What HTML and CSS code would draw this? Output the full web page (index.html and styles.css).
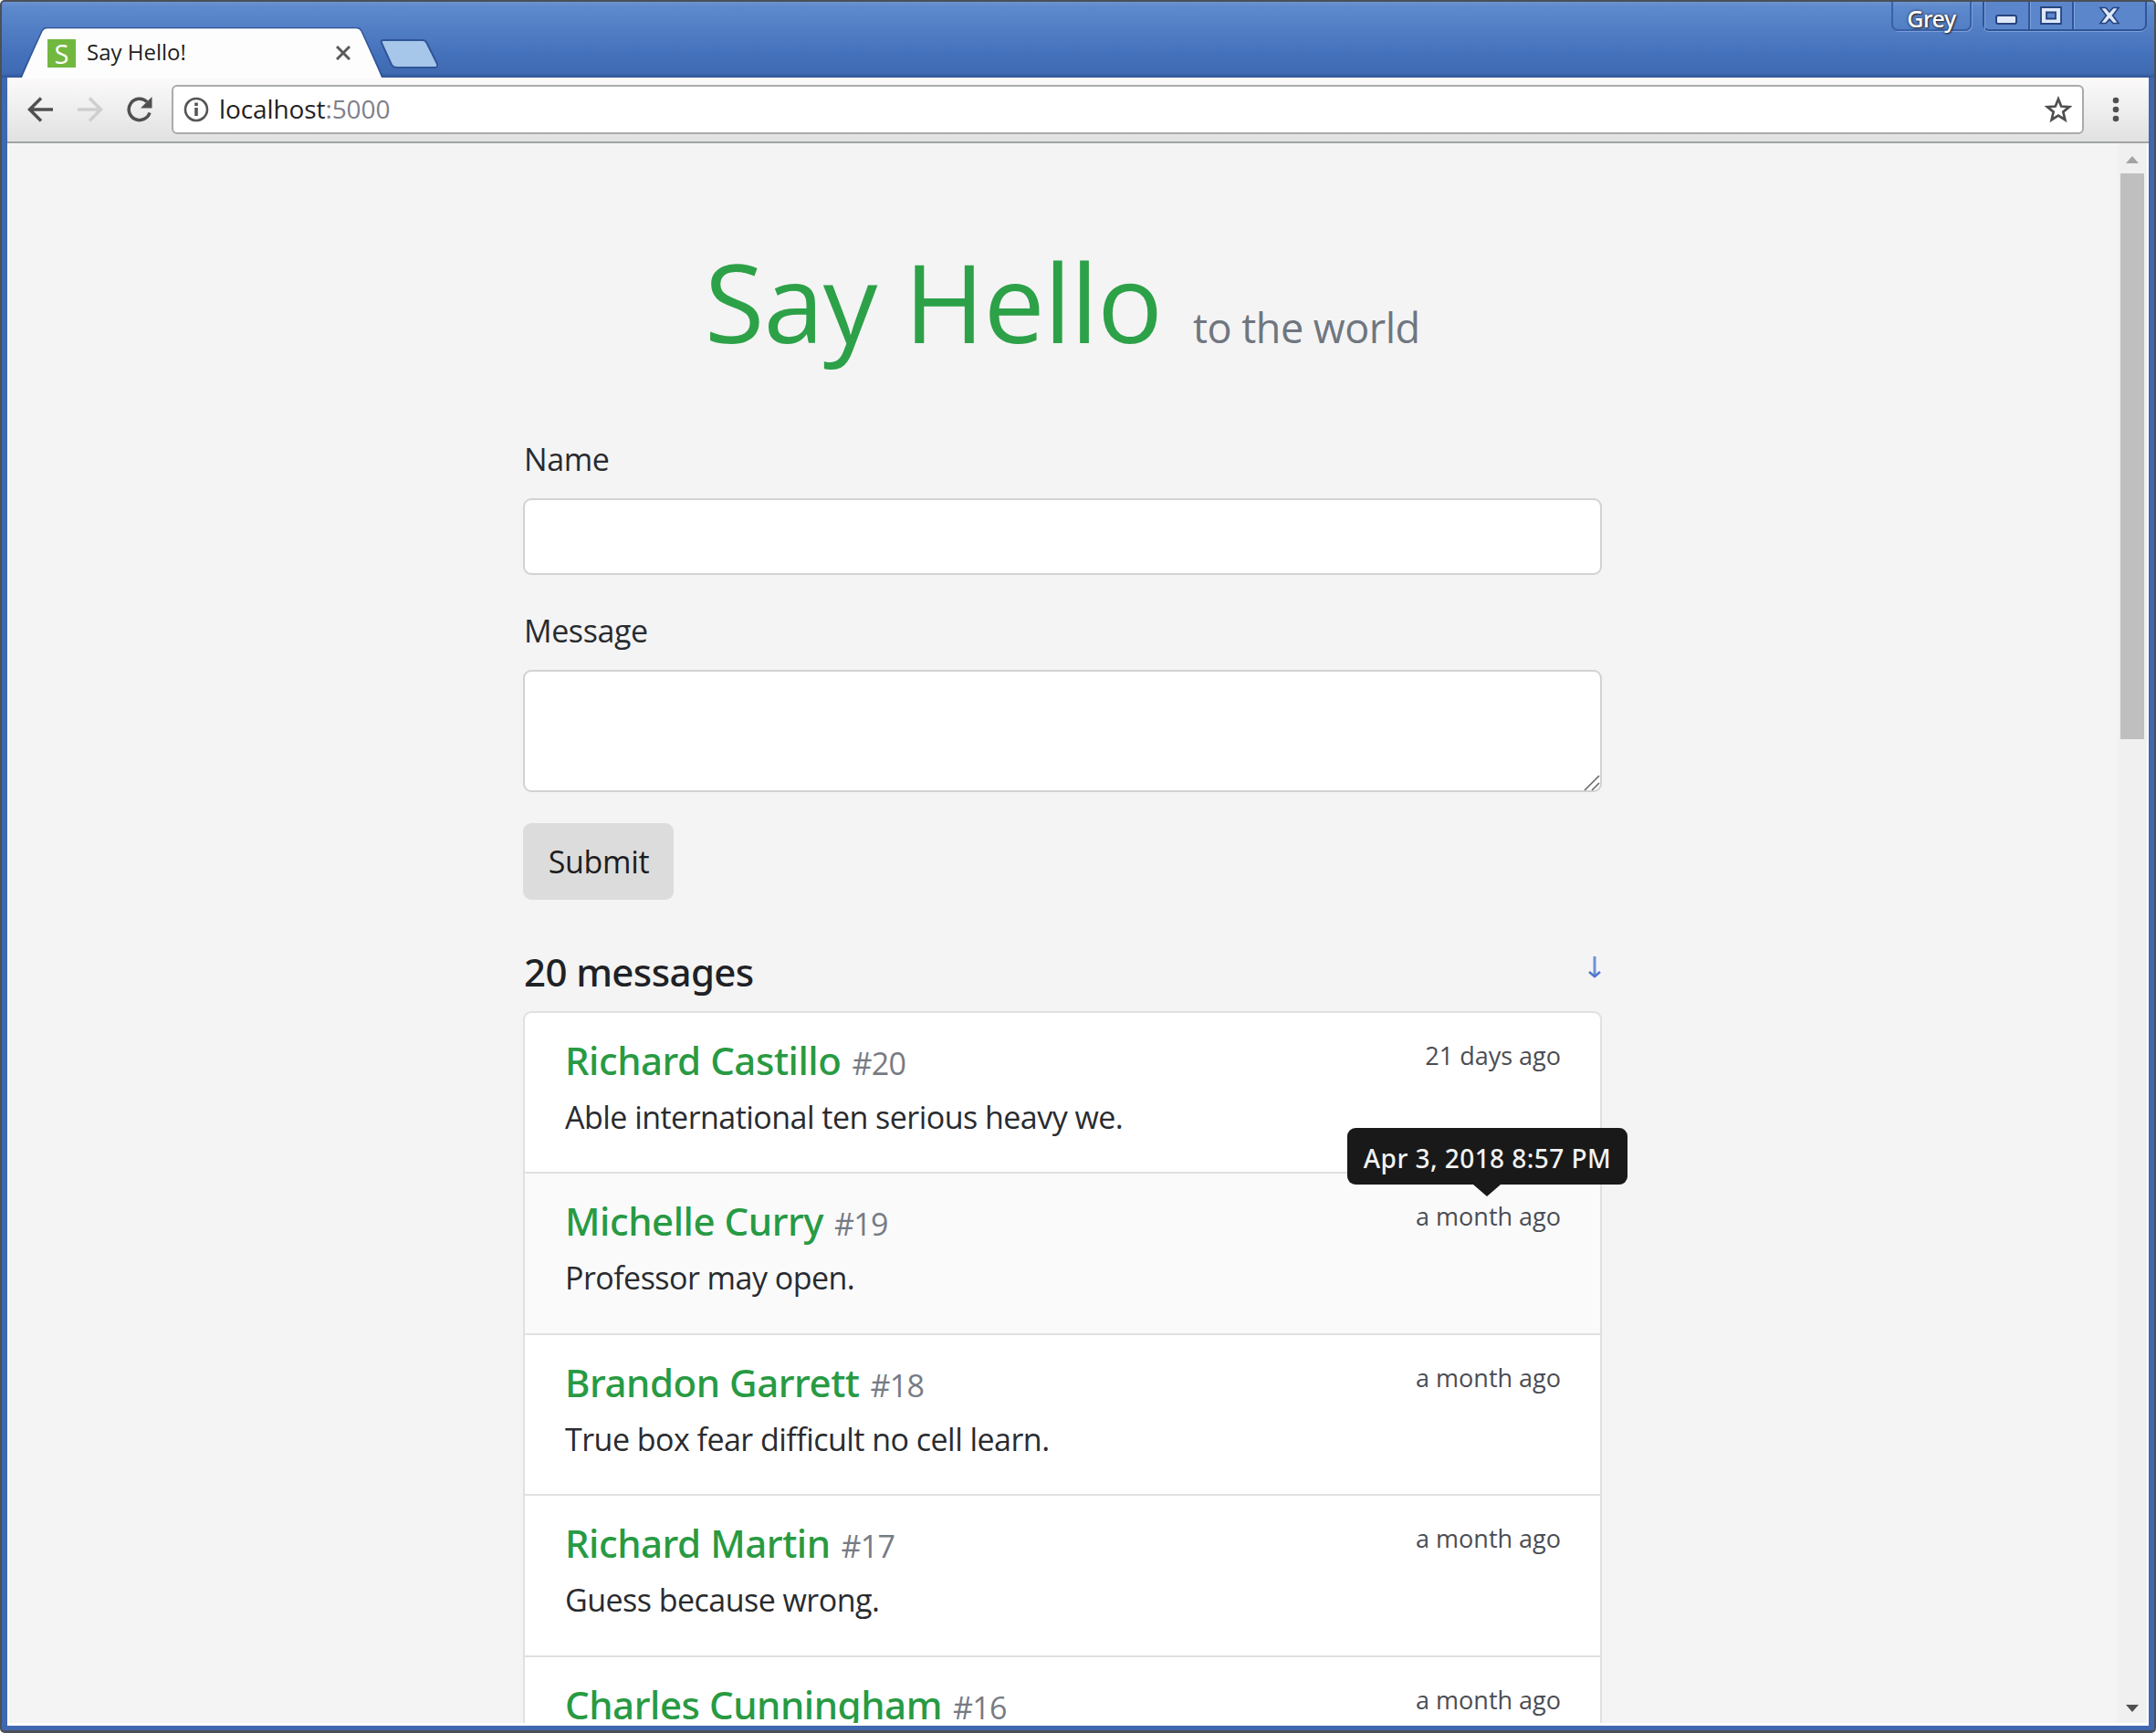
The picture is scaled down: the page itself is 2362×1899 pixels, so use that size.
FILE: index.html
```html
<!DOCTYPE html>
<html lang="en">
<head>
<meta charset="utf-8">
<title>Say Hello!</title>
<link rel="stylesheet" href="styles.css">
</head>
<body>
<div class="window">
  <header class="titlebar">
    <div class="tab">
      <svg class="tab-shape" width="398" height="56" viewBox="0 0 398 56"><path d="M0 55H2L24 4Q26 1 29 1H369Q372 1 374 4L396 55H398V56H0Z" fill="#fdfdfd"/><path d="M1 54L24 4Q26 .5 29 .5H369Q372 .5 374 4L397 54" fill="none" stroke="#2f5596" stroke-width="1.5"/></svg>
      <span class="favicon">S</span>
      <span class="tab-title">Say Hello!</span>
      <svg class="tab-close" width="16" height="16" viewBox="0 0 16 16"><path d="M1 1L15 15M15 1L1 15" stroke="#5a5a5a" stroke-width="3"/></svg>
    </div>
    <svg class="new-tab" width="68" height="36" viewBox="0 0 68 36"><path d="M5 2H48Q51 2 52.500 5L64 28Q65 32 61 32H20Q16 32 14 29L3 5Q2 2 5 2Z" fill="#a6c6ea" stroke="#2f5596" stroke-width="2"/></svg>
    <div class="controls">
      <span class="user">Grey</span>
      <div class="buttons">
        <span class="btn-min"><svg width="24" height="11" viewBox="0 0 24 11"><rect x="1" y="1" width="22" height="9" rx="2" fill="#dfe8f8" stroke="#26447e" stroke-width="2"/></svg></span>
        <span class="btn-max"><svg width="24" height="20" viewBox="0 0 24 20"><path d="M1 1H23V19H1ZM7 6.500V13.500H17V6.500Z" fill="#dfe8f8" fill-rule="evenodd" stroke="#26447e" stroke-width="1.800"/></svg></span>
        <span class="btn-close"><svg width="24" height="20" viewBox="0 0 24 20"><path d="M2 1.500H8L12 6L16 1.500H22L15.500 10L22 18.500H16L12 14L8 18.500H2L8.500 10Z" fill="#dfe8f8" stroke="#26447e" stroke-width="1.600"/></svg></span>
      </div>
    </div>
  </header>
  <nav class="toolbar">
    <svg class="nav-back" width="28" height="28" viewBox="0 0 28 28"><path d="M28 14H3M15 1.500L2.500 14L15 26.500" fill="none" stroke="#505050" stroke-width="3.500"/></svg>
    <svg class="nav-forward" width="28" height="28" viewBox="0 0 28 28"><path d="M0 14H25M13 1.500L25.500 14L13 26.500" fill="none" stroke="#cfcfcf" stroke-width="3.500"/></svg>
    <svg class="nav-reload" width="28" height="28" viewBox="0 0 28 28"><path d="M25 17.500A11.700 11.700 0 1 1 22 5.500" fill="none" stroke="#505050" stroke-width="3.500"/><path d="M27.500 0V12.500H15Z" fill="#505050"/></svg>
    <div class="omnibox">
      <svg width="28" height="28" viewBox="0 0 28 28"><circle cx="14" cy="14" r="12" fill="none" stroke="#555" stroke-width="2.600"/><path d="M14 12V21M14 6.500V10" stroke="#555" stroke-width="3.600"/></svg>
      <span class="url">localhost<span class="port">:5000</span></span>
      <svg class="star" width="30" height="30" viewBox="0 0 30 30"><path d="M15 3.500L18.200 11.500L27 12.100L20.300 17.600L22.400 26.200L15 21.500L7.600 26.200L9.700 17.600L3 12.100L11.800 11.500Z" fill="none" stroke="#505050" stroke-width="2.700"/></svg>
    </div>
    <svg class="menu" width="8" height="28" viewBox="0 0 8 28"><circle cx="4" cy="4" r="3.300" fill="#505050"/><circle cx="4" cy="14" r="3.300" fill="#505050"/><circle cx="4" cy="24" r="3.300" fill="#505050"/></svg>
  </nav>
  <div class="viewport">
    <main class="page">
      <h1 class="hero"><span class="hero-title">Say Hello</span><small class="hero-sub">to the world</small></h1>
      <form class="form">
        <label class="label" for="name">Name</label>
        <input class="field" id="name" type="text">
        <label class="label" for="message">Message</label>
        <div class="area-wrap">
          <textarea class="field area" id="message"></textarea>
          <svg class="grip" width="18" height="18" viewBox="0 0 18 18"><path d="M1 17L17 1M9 17L17 9" stroke="#666" stroke-width="1.600"/></svg>
        </div>
        <button class="submit" type="button">Submit</button>
      </form>
      <div class="list-head"><h2 class="count">20 messages</h2><svg class="sort" width="14" height="24" viewBox="0 0 14 24"><path d="M7 0V21" stroke="#7191d6" stroke-width="3"/><path d="M1 17L7 22L13 17" fill="none" stroke="#4f78cc" stroke-width="2.600"/></svg></div>
      <ul class="list">
        <li class="item"><div class="item-head"><h3 class="name">Richard Castillo</h3><small class="num">#20</small><time class="ago">21 days ago</time></div><p class="text">Able international ten serious heavy we.</p></li>
        <li class="item hovered"><div class="item-head"><h3 class="name">Michelle Curry</h3><small class="num">#19</small><time class="ago">a month ago<span class="tooltip">Apr 3, 2018 8:57 PM</span></time></div><p class="text">Professor may open.</p></li>
        <li class="item"><div class="item-head"><h3 class="name">Brandon Garrett</h3><small class="num">#18</small><time class="ago">a month ago</time></div><p class="text">True box fear difficult no cell learn.</p></li>
        <li class="item"><div class="item-head"><h3 class="name">Richard Martin</h3><small class="num">#17</small><time class="ago">a month ago</time></div><p class="text">Guess because wrong.</p></li>
        <li class="item"><div class="item-head"><h3 class="name">Charles Cunningham</h3><small class="num">#16</small><time class="ago">a month ago</time></div></li>
      </ul>
    </main>
    <aside class="scrollbar">
      <svg width="14" height="9" viewBox="0 0 14 9"><path d="M0 9L7 1L14 9Z" fill="#a3a3a3"/></svg>
      <div class="thumb"></div>
      <svg class="down" width="14" height="8" viewBox="0 0 14 8"><path d="M0 0H14L7 8Z" fill="#505050"/></svg>
    </aside>
  </div>
</div>
</body>
</html>
```
FILE: styles.css
```css
* { box-sizing: border-box; }
body { margin: 0; font-family: "Open Sans", "Noto Sans", sans-serif; color: #292b2f; }
h1, h2, h3, p, ul { margin: 0; padding: 0; font-weight: 400; }
svg { display: block; flex: none; }
.window { display: flex; flex-direction: column; width: 2362px; height: 1899px; overflow: hidden; background: #3f68b0; border: 2px solid #4b5057; border-bottom-width: 3px; border-radius: 5px; }

.titlebar { display: flex; flex: none; height: 83px; padding-left: 20px; background: linear-gradient(#6b93d0, #5d89cd 6px, #4370ba 60px, #406bb3 78px, #2f5596 83px); }
.tab { position: relative; display: flex; align-items: center; width: 398px; height: 56px; margin-top: 28px; padding-left: 30px; }
.tab-shape { position: absolute; left: 0; top: 0; }
.favicon { position: relative; display: flex; align-items: center; justify-content: center; width: 31px; height: 31px; background: #72b840; color: #fff; font-size: 29px; line-height: 31px; }
.tab-title { position: relative; margin-left: 12px; padding-bottom: 2px; font-size: 24px; line-height: 32px; color: #222; }
.tab-close { position: absolute; left: 346px; top: 20px; }
.new-tab { margin: 40px 0 0 -5px; }
.controls { display: flex; margin-left: auto; gap: 12px; padding-right: 8px; height: 34px; }
.user { width: 88px; height: 32px; border: 2px solid #3960a6; border-top: 0; border-radius: 0 0 7px 7px; box-shadow: 1px 1px 0 #7a9fdb; color: #fff; font: 500 25px/36px "Noto Sans", sans-serif; letter-spacing: -0.4px; text-align: center; text-shadow: 0 0 3px #223, 1px 1px 2px #333; }
.buttons { display: flex; width: 180px; height: 32px; border: 2px solid #2f5597; border-top: 0; border-radius: 0 0 7px 7px; box-shadow: 0 1px 0 #7a9fdb; background: #5b86cb; }
.buttons span { display: flex; align-items: center; justify-content: center; width: 48px; box-shadow: inset 1px 0 0 #7ea3de; }
.buttons .btn-min { padding-top: 9px; }
.buttons .btn-max { border-left: 2px solid #2f5597; border-right: 2px solid #2f5597; width: 50px; }
.buttons .btn-close { flex: 1; }

.toolbar { display: flex; flex: none; align-items: center; height: 72px; margin: 0 6px; padding-left: 22px; background: linear-gradient(#fcfafa, #f0f0f0 30px, #e1e1e1); border-bottom: 2px solid #a2a4a4; }
.nav-forward { margin-left: 27px; }
.nav-reload { margin-left: 26px; }
.omnibox { display: flex; align-items: center; width: 2095px; height: 54px; margin-left: 21px; padding: 0 11px; background: #fff; border: 2px solid #a9aaaa; border-radius: 6px; }
.url { margin-left: 11px; padding-bottom: 2px; font-size: 28px; line-height: 46px; letter-spacing: -0.1px; color: #222; }
.port { color: #80808a; }
.star { margin-left: auto; }
.menu { margin-left: 31px; }

.viewport { display: flex; flex: 1; min-height: 0; margin: 0 6px 5px; background: #f4f4f4; border-left: 2px solid #fff; border-right: 2px solid #fbfbfb; border-bottom: 3px solid #fff; overflow: hidden; }
.page { flex: 1; padding: 0 565px 0 563px; }
.scrollbar { display: flex; flex-direction: column; align-items: center; width: 32px; padding: 13px 0 12px; background: #f0f0f0; }
.thumb { width: 26px; height: 620px; margin-top: 11px; background: #bfbfbf; }
.down { margin-top: auto; }

.hero { display: flex; align-items: baseline; height: 305px; padding: 98px 0 0 199px; white-space: nowrap; }
.hero-title { font-size: 119px; line-height: 150px; letter-spacing: -0.8px; color: #2da148; }
.hero-sub { font-size: 45px; letter-spacing: -0.5px; margin-left: 34px; color: #6f7680; }
.form { display: flex; flex-direction: column; align-items: stretch; height: 574px; }
.label { height: 84px; padding: 15px 0 0 1px; font-size: 34px; line-height: 52px; letter-spacing: -0.4px; }
.field { display: block; width: 100%; height: 84px; padding: 0 20px; border: 2px solid #d0d2d4; border-radius: 9px; background: #fff; font: inherit; outline: none; resize: none; }
.field + .label { height: 104px; padding-top: 35px; }
.area-wrap { position: relative; }
.area { height: 134px; }
.grip { position: absolute; right: 2px; bottom: 1px; }
.submit { align-self: flex-start; width: 165px; height: 84px; margin-top: 34px; padding: 0 0 0 1px; border: 0; border-radius: 9px; background: #dcdcdc; font: inherit; font-size: 34px; letter-spacing: -0.3px; color: #1c1d20; }
.list-head { display: flex; justify-content: space-between; align-items: flex-start; height: 72px; }
.count { padding-left: 1px; font: 500 42px/58px "Noto Sans", sans-serif; letter-spacing: -0.6px; color: #1f2226; }
.sort { margin: 12px 1px 0 0; }
.list { list-style: none; border: 2px solid #dfe0e1; border-radius: 9px 9px 0 0; background: #fff; }
.item { height: 176.4px; padding: 23px 43px 0 44px; border-bottom: 2px solid #dfe0e1; }
.hovered { background: #fafafb; }
.item-head { display: flex; align-items: baseline; height: 61px; white-space: nowrap; }
.name { font: 500 42px/58px "Noto Sans", sans-serif; letter-spacing: -0.45px; color: #289a43; }
.num { margin-left: 12px; font-size: 34px; letter-spacing: -0.7px; color: #777b84; }
.ago { position: relative; align-self: flex-start; margin-left: auto; font-size: 27px; line-height: 47px; color: #4b4d53; }
.text { font-size: 34px; line-height: 60px; letter-spacing: -0.53px; white-space: nowrap; }
.tooltip { position: absolute; right: -73px; top: -73px; width: 307px; height: 62px; border-radius: 9px; background: #191919; color: #f2f2f2; font: 500 28px/66px "Noto Sans", sans-serif; letter-spacing: 0.45px; text-align: center; }
.tooltip::after { content: ""; position: absolute; left: 138px; top: 62px; border: 15px solid transparent; border-top: 13px solid #191919; border-bottom: 0; }
```
